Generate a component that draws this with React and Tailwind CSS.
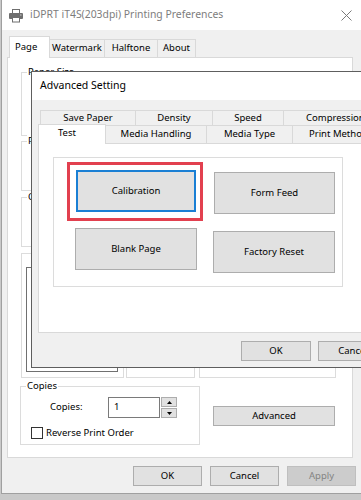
import React from 'react';

const Btn = ({ children, className = '', border = 'border border-[#adadad]' }) => (
  <button className={`shrink-0 flex items-center justify-center bg-[#e1e1e1] text-black leading-none ${border} ${className}`}>
    {children}
  </button>
);

const Group = ({ label, className = '', children }) => (
  <div className={`shrink-0 border border-[#dcdcdc] bg-white ${className}`}>
    <div className="-mt-[7px] ml-[5px] px-[1px] w-fit bg-white leading-[12px] whitespace-nowrap">{label}</div>
    {children}
  </div>
);

const PrinterIcon = () => (
  <svg width="16" height="15" viewBox="0 0 16 15">
    <rect x="4.5" y="1.5" width="7" height="4" fill="#fff" stroke="#6e6e6e" />
    <rect x="1" y="5" width="14" height="6" rx="1" fill="#6e6e6e" />
    <rect x="4.5" y="9.5" width="7" height="4.5" fill="#fff" stroke="#6e6e6e" />
    <rect x="12" y="6.5" width="1.5" height="1" fill="#d0d0d0" />
  </svg>
);

const CloseIcon = () => (
  <svg width="11" height="11" viewBox="0 0 11 11">
    <path d="M0.5 0.5 L10.5 10.5 M10.5 0.5 L0.5 10.5" stroke="#7a7a7a" strokeWidth="1" />
  </svg>
);

export default function App() {
  return (
    <div className="relative w-[361px] h-[500px] overflow-hidden bg-[#c9c9c9] text-[9.5px] text-black font-['Noto_Sans',sans-serif]">
      {/* Printing Preferences window */}
      <div className="ml-[1px] w-[360px] h-[494px] bg-[#f0f0f0] border-l border-b border-[#a0a0a0] flex flex-col">
        <div className="h-[30px] bg-white flex items-center pl-[6px] shrink-0">
          <PrinterIcon />
          <span className="ml-[6px] text-[10.4px] text-[#7d7d7d]">iDPRT iT4S(203dpi) Printing Preferences</span>
          <span className="ml-auto mr-[9px] flex"><CloseIcon /></span>
        </div>

        {/* tabs */}
        <div className="mt-[6px] ml-[7px] h-[22px] -mb-px flex items-end relative z-10 shrink-0">
          <div className="h-[22px] w-[41px] bg-white border border-[#d9d9d9] border-b-0 flex items-center pl-[5px] pb-[1px]">Page</div>
          <div className="h-[18px] w-[56px] mb-px -ml-px border border-[#d9d9d9] border-b-0 flex items-center justify-center">Watermark</div>
          <div className="h-[18px] w-[54px] mb-px -ml-px border border-[#d9d9d9] border-b-0 flex items-center justify-center">Halftone</div>
          <div className="h-[18px] w-[39px] mb-px -ml-px border border-[#d9d9d9] border-b-0 flex items-center justify-center">About</div>
        </div>

        <div className="ml-[5px] w-[346px] h-[401px] shrink-0 bg-white border border-[#d9d9d9] flex flex-col pl-[13px]">
          <Group label="Paper Size" className="mt-[14px] w-[313px] h-[64px]" />
          <Group label="Print Speed" className="mt-[5px] w-[313px] h-[50px]" />
          <Group label="Orientation" className="mt-[6px] w-[313px] h-[50px]" />
          <div className="mt-[6px] flex gap-[2px] h-[125px] shrink-0">
            <Group label="Preview" className="w-[103px] h-[125px] pl-[4px]">
              <div className="mt-[8px] w-[92px] h-[105px] border border-[#707070]" />
            </Group>
            <div className="w-[69px] h-[125px] border border-[#dcdcdc]" />
            <div className="ml-[2px] w-[137px] h-[125px] border border-[#dcdcdc]" />
          </div>

          <div className="mt-[8px] flex items-start">
            <Group label="Copies" className="-ml-px w-[180px] h-[59px]">
              <div className="mt-[5px] flex items-center pl-[29px]">
                <span className="w-[58px]">Copies:</span>
                <div className="w-[52px] h-[21px] border border-[#7a7a7a] flex items-center pl-[5px]">1</div>
                <div className="ml-[1px] w-[16px] h-[21px] flex flex-col justify-between">
                  <div className="h-[10px] bg-[#e1e1e1] border border-[#adadad] flex items-center justify-center">
                    <svg width="5" height="3" viewBox="0 0 5 3"><path d="M2.5 0 L5 3 L0 3 Z" fill="#000" /></svg>
                  </div>
                  <div className="h-[10px] bg-[#e1e1e1] border border-[#adadad] flex items-center justify-center">
                    <svg width="5" height="3" viewBox="0 0 5 3"><path d="M0 0 L5 0 L2.5 3 Z" fill="#000" /></svg>
                  </div>
                </div>
              </div>
              <div className="mt-[8px] flex items-center pl-[10px]">
                <div className="w-[12px] h-[12px] border border-[#333] bg-white" />
                <span className="ml-[3px]">Reverse Print Order</span>
              </div>
            </Group>
            <Btn className="ml-[13px] mt-[20px] w-[122px] h-[20px]">Advanced</Btn>
          </div>
        </div>

        <div className="mt-[8px] ml-[131px] flex gap-[8px]">
          <Btn className="w-[69px] h-[20px]">OK</Btn>
          <Btn className="w-[69px] h-[20px]">Cancel</Btn>
          <button className="shrink-0 w-[69px] h-[20px] flex items-center justify-center bg-[#cccccc] border border-[#bfbfbf] text-[#838383] leading-none">Apply</button>
        </div>
      </div>

      {/* Advanced Setting dialog */}
      <div className="absolute z-20 left-[31px] top-[71px] w-[420px] h-[297px] border border-[#5e5e5e] bg-[#f0f0f0] flex flex-col">
        <div className="h-[28px] bg-white flex items-center pl-[8px] text-[10.5px] shrink-0">Advanced Setting</div>

        <div className="mt-[10px] ml-[8px] h-[15px] flex shrink-0">
          <div className="w-[96px] border border-[#d9d9d9] border-b-0 flex items-center justify-center">Save Paper</div>
          <div className="w-[78px] -ml-px border border-[#d9d9d9] border-b-0 flex items-center justify-center">Density</div>
          <div className="w-[72px] -ml-px border border-[#d9d9d9] border-b-0 flex items-center justify-center">Speed</div>
          <div className="w-[108px] -ml-px border border-[#d9d9d9] border-b-0 flex items-center pl-[22px] whitespace-nowrap">Compression</div>
        </div>

        <div className="ml-[6px] h-[19px] -mb-px flex items-end relative z-10 shrink-0">
          <div className="h-[20px] w-[68px] bg-white border border-[#d9d9d9] border-b-0 flex items-center pl-[19px] pb-[2px]">Test</div>
          <div className="h-[18px] w-[102px] mb-px -ml-px border border-[#d9d9d9] border-b-0 flex items-center justify-center">Media Handling</div>
          <div className="h-[18px] w-[87px] mb-px -ml-px border border-[#d9d9d9] border-b-0 flex items-center justify-center">Media Type</div>
          <div className="h-[18px] w-[98px] mb-px -ml-px border border-[#d9d9d9] border-b-0 flex items-center pl-[16px] whitespace-nowrap">Print Method</div>
        </div>

        <div className="ml-[6px] w-[380px] h-[190px] bg-white border border-[#d9d9d9] shrink-0 pl-[14px] pt-[13px]">
          <div className="w-[290px] h-[130px] border border-[#dcdcdc] flex">
            <div className="ml-[13px] mt-[4px] flex flex-col">
              <div className="w-[136px] h-[59px] border-[3px] border-[#e2404f] pl-[6px] pt-[5px]">
                <Btn className="w-[120px] h-[42px]" border="border-2 border-[#1a7fd4]">Calibration</Btn>
              </div>
              <Btn className="mt-[7px] ml-[8px] w-[122px] h-[42px]">Blank Page</Btn>
            </div>
            <div className="ml-[10px] flex flex-col">
              <Btn className="mt-[14px] ml-[1px] w-[121px] h-[42px]">Form Feed</Btn>
              <Btn className="mt-[17px] w-[122px] h-[42px]">Factory Reset</Btn>
            </div>
          </div>
        </div>

        <div className="mt-[8px] ml-[209px] flex gap-[7px]">
          <Btn className="w-[70px] h-[20px]">OK</Btn>
          <Btn className="w-[70px] h-[20px]">Cancel</Btn>
        </div>
      </div>
    </div>
  );
}
